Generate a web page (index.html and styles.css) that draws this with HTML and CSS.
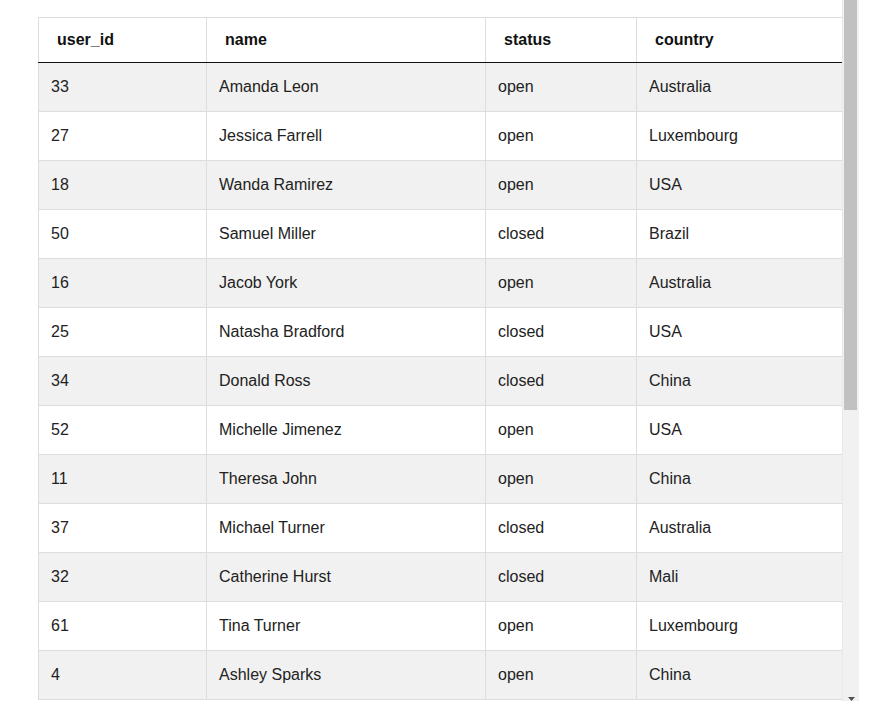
FILE: index.html
```html
<!DOCTYPE html>
<html>
<head>
<meta charset="utf-8">
<link rel="stylesheet" href="styles.css">
</head>
<body>
<div class="frame">
  <div class="content">
    <table class="grid">
      <colgroup>
        <col class="c1"><col class="c2"><col class="c3"><col class="c4">
      </colgroup>
      <thead>
        <tr><th>user_id</th><th>name</th><th>status</th><th>country</th></tr>
      </thead>
      <tbody>
        <tr><td>33</td><td>Amanda Leon</td><td>open</td><td>Australia</td></tr>
        <tr><td>27</td><td>Jessica Farrell</td><td>open</td><td>Luxembourg</td></tr>
        <tr><td>18</td><td>Wanda Ramirez</td><td>open</td><td>USA</td></tr>
        <tr><td>50</td><td>Samuel Miller</td><td>closed</td><td>Brazil</td></tr>
        <tr><td>16</td><td>Jacob York</td><td>open</td><td>Australia</td></tr>
        <tr><td>25</td><td>Natasha Bradford</td><td>closed</td><td>USA</td></tr>
        <tr><td>34</td><td>Donald Ross</td><td>closed</td><td>China</td></tr>
        <tr><td>52</td><td>Michelle Jimenez</td><td>open</td><td>USA</td></tr>
        <tr><td>11</td><td>Theresa John</td><td>open</td><td>China</td></tr>
        <tr><td>37</td><td>Michael Turner</td><td>closed</td><td>Australia</td></tr>
        <tr><td>32</td><td>Catherine Hurst</td><td>closed</td><td>Mali</td></tr>
        <tr><td>61</td><td>Tina Turner</td><td>open</td><td>Luxembourg</td></tr>
        <tr><td>4</td><td>Ashley Sparks</td><td>open</td><td>China</td></tr>
      </tbody>
    </table>
  </div>
  <div class="scrollbar">
    <div class="thumb"></div>
    <div class="track-rest"></div>
    <div class="arrow-down">
      <svg width="7" height="4" viewBox="0 0 7 4"><path d="M0 0H7L3.5 4Z" fill="#505050"/></svg>
    </div>
  </div>
</div>
</body>
</html>
```

FILE: styles.css
```css
html, body {
  margin: 0;
  padding: 0;
  overflow: hidden;
  background: #ffffff;
}

body {
  font-family: "Liberation Sans", Arial, sans-serif;
  font-size: 16px;
  color: #222222;
}

.frame {
  display: flex;
  margin-left: 38px;
  height: 708px;
}

.content {
  width: 804px;
  padding-top: 17px;
  overflow: hidden;
}

.scrollbar {
  width: 17px;
  display: flex;
  flex-direction: column;
  background: #f1f1f1;
  box-sizing: border-box;
  border-left: 1px solid #e9e9e9;
}

.thumb {
  height: 410px;
  margin: 0 2px 0 1px;
  background: #c1c1c1;
}

.track-rest {
  flex: 1;
}

.arrow-down {
  height: 17px;
  display: flex;
  justify-content: center;
  align-items: flex-start;
  padding-top: 6px;
  box-sizing: border-box;
}

.arrow-down svg {
  display: block;
}

.grid {
  width: 804px;
  table-layout: fixed;
  border-collapse: collapse;
}

.c1 { width: 168px; }
.c2 { width: 279px; }
.c3 { width: 151px; }
.c4 { width: 206px; }

.grid th,
.grid td {
  border: 1px solid #dddddd;
  text-align: left;
  white-space: nowrap;
}

.grid th {
  height: 44px;
  padding: 0 0 0 18px;
  font-weight: bold;
  color: #111111;
  border-bottom: 1px solid #111111;
}

.grid td {
  height: 48px;
  padding: 0 0 0 12px;
  color: #222222;
}

.grid tbody tr:nth-child(odd) {
  background: #f1f1f1;
}
```
